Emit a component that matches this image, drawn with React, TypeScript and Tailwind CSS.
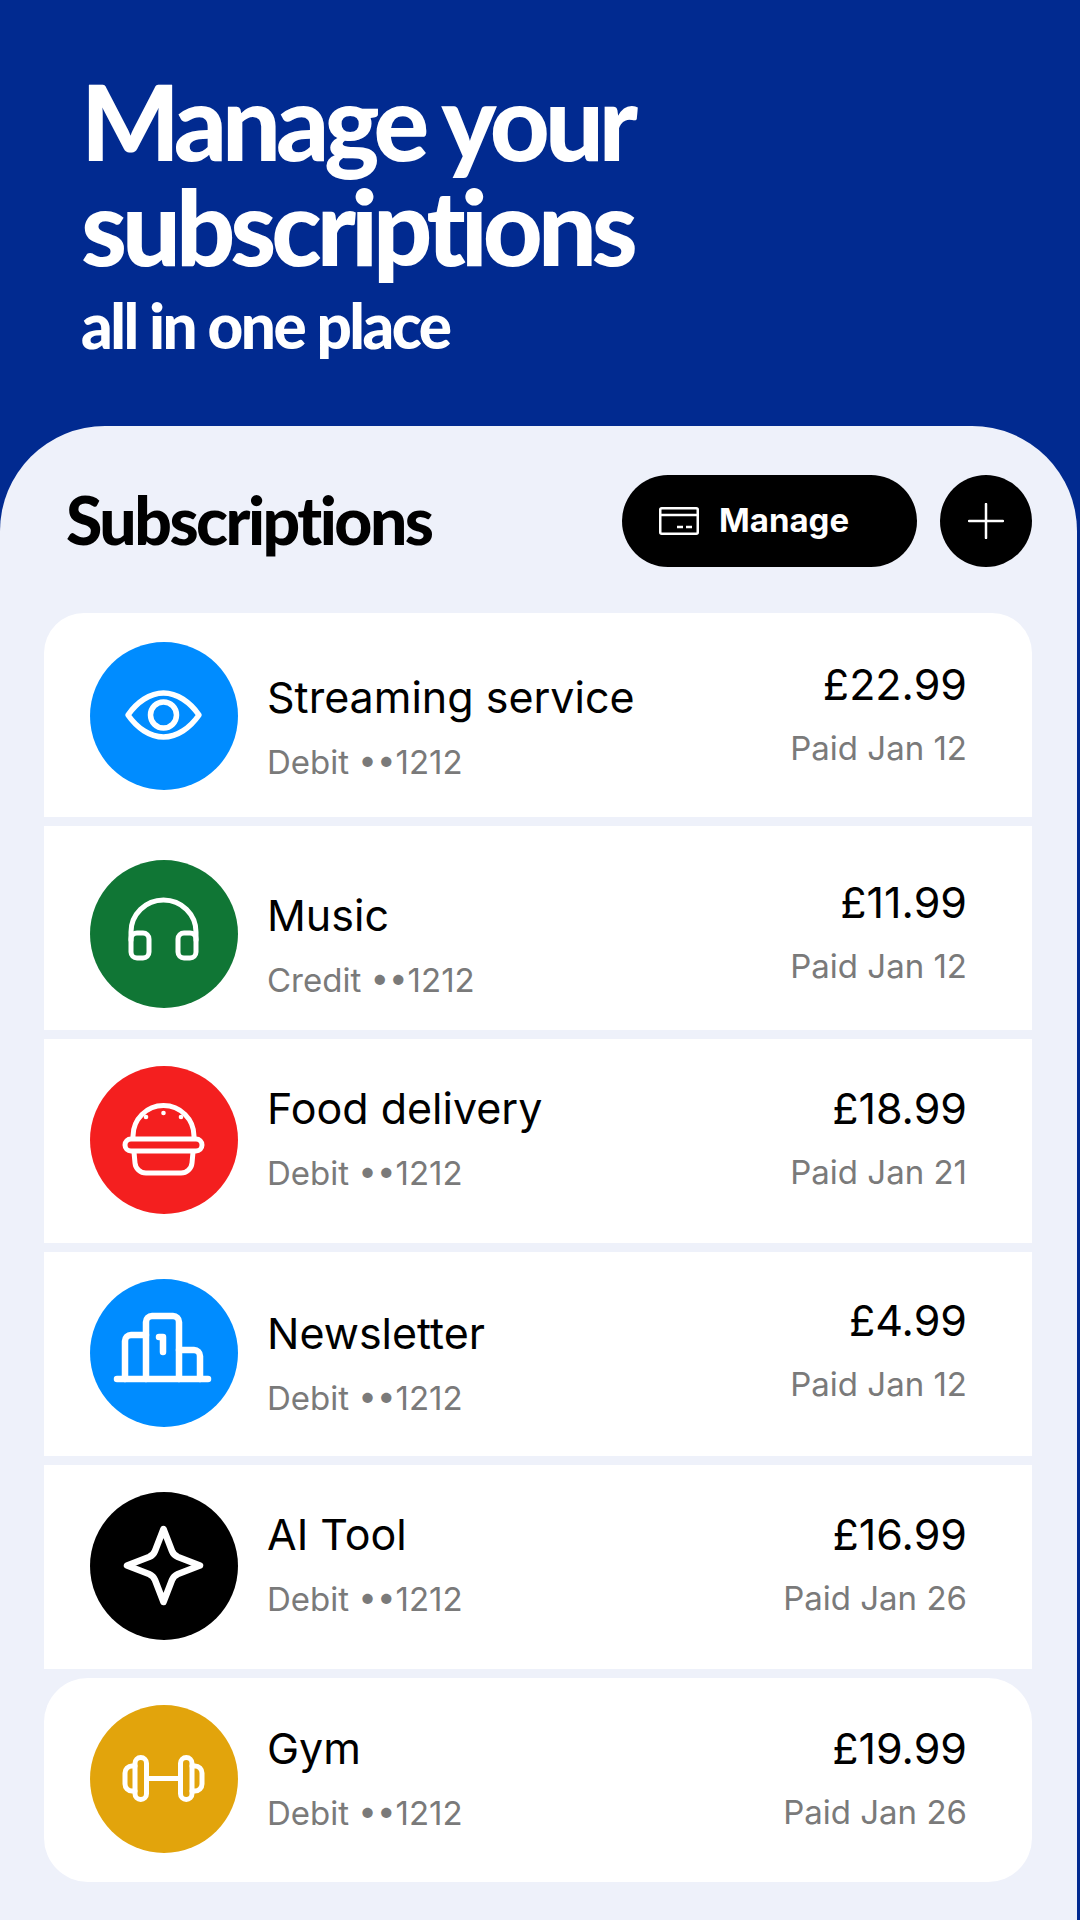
import React from 'react'

type Row = {
  name: string
  account: string
  amount: string
  paid: string
  circle: string
  circleTop: string
  nameTop: string
  amountTop: string
  corners: string
  icon: React.ReactNode
}

const stroke = {
  fill: 'none',
  stroke: 'white',
  strokeWidth: 5.5,
  strokeLinecap: 'round' as const,
  strokeLinejoin: 'round' as const
}

// All icons are drawn in the 148px box of the round badge
const EyeIcon = (
  <g {...stroke}>
    <path d="M38 73 C47 60 60 51 73.5 51 C87 51 100 60 109 73 C100 86 87 95 73.5 95 C60 95 47 86 38 73Z" />
    <circle cx="73.5" cy="73" r="13" />
  </g>
)

const HeadphonesIcon = (
  <g {...stroke} strokeWidth={5}>
    <path d="M41 80 V72 a32.5 32 0 0 1 65 0 V80" />
    <rect x="41" y="73" width="18" height="25" rx="6" />
    <rect x="88" y="73" width="18" height="25" rx="6" />
  </g>
)

const BurgerIcon = (
  <g {...stroke} strokeWidth={5}>
    <path d="M43 72 V70 a30.5 30.5 0 0 1 61 0 V72" />
    <rect x="35" y="73" width="77" height="12" rx="6" />
    <path d="M44 86 L45 97 a11 11 0 0 0 11 10 H91 a11 11 0 0 0 11 -10 L103 86" />
    <circle cx="56" cy="51" r="2.3" fill="white" stroke="none" />
    <circle cx="73.5" cy="47" r="2.3" fill="white" stroke="none" />
    <circle cx="91" cy="51" r="2.3" fill="white" stroke="none" />
  </g>
)

const PodiumIcon = (
  <g {...stroke} strokeWidth={6.5}>
    <path d="M27 100 H118" />
    <path d="M35 100 V62 a6 6 0 0 1 6 -6 H56" />
    <path d="M56 100 V43 a6 6 0 0 1 6 -6 H83 a6 6 0 0 1 6 6 V100" />
    <path d="M89 71 H104 a6 6 0 0 1 6 6 V100" />
    <path d="M69 58 H73 V73" />
  </g>
)

const StarIcon = (
  <g {...stroke} strokeWidth={6.5}>
    <path d="M73.5 37 L82 59 Q83.500 63 88 65 L110 73.5 L88 82 Q83.500 84 82 88 L73.5 110 L65 88 Q63.500 84 59 82 L37 73.5 L59 65 Q63.500 63 65 59 Z" />
  </g>
)

const DumbbellIcon = (
  <g {...stroke} strokeWidth={5}>
    <path d="M57 73.500 H90" />
    <rect x="45" y="52.500" width="11.500" height="42" rx="5.750" />
    <rect x="90.500" y="52.500" width="11.500" height="42" rx="5.750" />
    <path d="M45 61 H42 a7 7 0 0 0 -7 7 V79 a7 7 0 0 0 7 7 H45" />
    <path d="M102 61 H105 a7 7 0 0 1 7 7 V79 a7 7 0 0 1 -7 7 H102" />
  </g>
)

const rows: Row[] = [
  {
    name: 'Streaming service',
    account: 'Debit ••1212',
    amount: '£22.99',
    paid: 'Paid Jan 12',
    circle: 'bg-[#008cff]',
    circleTop: 'mt-[29px]',
    nameTop: 'mt-[59px]',
    amountTop: 'mt-[46px]',
    corners: 'rounded-t-[40px]',
    icon: EyeIcon
  },
  {
    name: 'Music',
    account: 'Credit ••1212',
    amount: '£11.99',
    paid: 'Paid Jan 12',
    circle: 'bg-[#107635]',
    circleTop: 'mt-[34px]',
    nameTop: 'mt-[64px]',
    amountTop: 'mt-[51px]',
    corners: '',
    icon: HeadphonesIcon
  },
  {
    name: 'Food delivery',
    account: 'Debit ••1212',
    amount: '£18.99',
    paid: 'Paid Jan 21',
    circle: 'bg-[#f41f1f]',
    circleTop: 'mt-[27px]',
    nameTop: 'mt-[44px]',
    amountTop: 'mt-[44px]',
    corners: '',
    icon: BurgerIcon
  },
  {
    name: 'Newsletter',
    account: 'Debit ••1212',
    amount: '£4.99',
    paid: 'Paid Jan 12',
    circle: 'bg-[#008cff]',
    circleTop: 'mt-[27px]',
    nameTop: 'mt-[56px]',
    amountTop: 'mt-[43px]',
    corners: '',
    icon: PodiumIcon
  },
  {
    name: 'AI Tool',
    account: 'Debit ••1212',
    amount: '£16.99',
    paid: 'Paid Jan 26',
    circle: 'bg-black',
    circleTop: 'mt-[27px]',
    nameTop: 'mt-[44px]',
    amountTop: 'mt-[44px]',
    corners: '',
    icon: StarIcon
  },
  {
    name: 'Gym',
    account: 'Debit ••1212',
    amount: '£19.99',
    paid: 'Paid Jan 26',
    circle: 'bg-[#e2a40c]',
    circleTop: 'mt-[27px]',
    nameTop: 'mt-[45px]',
    amountTop: 'mt-[45px]',
    corners: 'rounded-[44px]',
    icon: DumbbellIcon
  }
]

function SubscriptionRow({ row }: { row: Row }) {
  return (
    <div className={`flex h-[204px] bg-white pl-[46px] pr-[65px] ${row.corners}`}>
      <div className={`h-[148px] w-[148px] shrink-0 rounded-full ${row.circle} ${row.circleTop}`}>
        <svg width="148" height="148" viewBox="0 0 148 148">
          {row.icon}
        </svg>
      </div>
      <div className={`ml-[29px] ${row.nameTop}`}>
        <div className="text-[43px] leading-[50px] text-black">{row.name}</div>
        <div className="mt-[20px] text-[33px] leading-[40px] text-[#7a7a7a]">{row.account}</div>
      </div>
      <div className={`ml-auto text-right ${row.amountTop}`}>
        <div className="text-[43px] leading-[50px] text-black">{row.amount}</div>
        <div className="mt-[19px] text-[33px] leading-[40px] text-[#7a7a7a]">{row.paid}</div>
      </div>
    </div>
  )
}

export default function App() {
  return (
    <div className="flex h-[1920px] w-[1080px] flex-col overflow-hidden bg-[#012a90] font-['Inter',sans-serif]">
      {/* Hero */}
      <div className="h-[426px] shrink-0 pl-[81px] pt-[68px] font-['Lato',sans-serif] font-black text-white">
        <h1 className="text-[104px] leading-[105px] tracking-[-5px]">
          Manage your
          <br />
          subscriptions
        </h1>
        <p className="mt-[12px] text-[62px] leading-[70px] tracking-[-2.500px]">all in one place</p>
      </div>

      {/* Panel */}
      <div className="w-[1077px] flex-1 rounded-t-[105px] bg-[#eef1fa] pl-[44px] pr-[45px]">
        <div className="flex h-[187px] items-start">
          <h2 className="ml-[22px] mt-[54px] font-['Lato',sans-serif] text-[66px] font-black leading-[80px] tracking-[-2.500px] text-black">
            Subscriptions
          </h2>
          <button className="ml-auto mt-[49px] flex h-[92px] w-[295px] items-center rounded-full bg-black pl-[37px] text-[33px] font-bold text-white">
            <svg width="40" height="28" viewBox="0 0 40 28" fill="none" stroke="white" strokeWidth="2.500">
              <rect x="1.250" y="1.250" width="37.500" height="25.500" rx="1.500" />
              <path d="M1.250 8 H38.750" />
              <path d="M18 20 H24 M27 20 H33" />
            </svg>
            <span className="ml-[20px]">Manage</span>
          </button>
          <button className="ml-[23px] mt-[49px] flex h-[92px] w-[92px] items-center justify-center rounded-full bg-black">
            <svg width="36" height="36" viewBox="0 0 36 36" fill="none" stroke="white" strokeWidth="2.500" strokeLinecap="round">
              <path d="M18 1 V35 M1 18 H35" />
            </svg>
          </button>
        </div>

        <div className="flex flex-col gap-[9px]">
          {rows.map((row) => (
            <SubscriptionRow key={row.name} row={row} />
          ))}
        </div>
      </div>
    </div>
  )
}
